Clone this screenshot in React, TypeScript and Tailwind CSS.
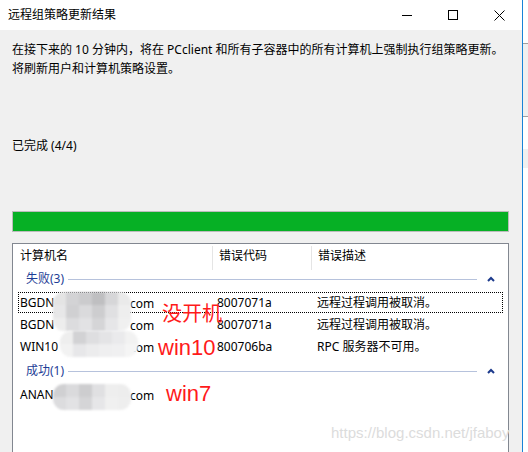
import React from "react";

const ui = "font-['Noto_Sans','Noto_Sans_CJK_SC',sans-serif]";

type Row = { name: string; code: string; desc: string; focused?: boolean };

const failed: Row[] = [
  { name: "BGDN", code: "8007071a", desc: "远程过程调用被取消。", focused: true },
  { name: "BGDN", code: "8007071a", desc: "远程过程调用被取消。" },
  { name: "WIN10", code: "800706ba", desc: "RPC 服务器不可用。" },
];

const shades = [
  "#e4e4e4", "#d3d3d5", "#cbcbcd", "#bfbfc1", "#d6d6d8", "#eaeaea",
  "#e7e7e8", "#d0d0d2", "#dadadc", "#cdcdcf", "#e0e0e2", "#eeeeee",
  "#ededed", "#dcdcde", "#e2e2e4", "#d5d5d7", "#e6e6e8", "#f0f0f0",
  "#eeeeee", "#d2d2d4", "#dedee0", "#e4e4e6", "#eaeaec", "#f2f2f2",
  "#f2f2f2", "#e7e7e9", "#ececed", "#efeff0", "#f0f0f1", "#f5f5f5",
];

function Mosaic({ rows, offset = 0 }: { rows: number; offset?: number }) {
  return (
    <div className="grid grid-cols-6 overflow-hidden rounded-[11px] blur-[0.8px]">
      {Array.from({ length: rows * 6 }).map((_, i) => (
        <div key={i} className="h-[13px] w-[13px]" style={{ background: shades[(i + offset) % shades.length] }} />
      ))}
    </div>
  );
}

function GroupHeader({ label }: { label: string }) {
  return (
    <div className="flex h-[26px] items-center pl-[13px] pr-[8px]">
      <span className="text-[12px] leading-none text-[#1e3d96]">{label}</span>
      <div className="ml-[4px] h-px flex-1 bg-[#b6c2dc]" />
      <svg width="22" height="10" viewBox="0 0 22 10" className="ml-[1px]">
        <path d="M10 7 L13 4 L16 7" fill="none" stroke="#1c3a8c" strokeWidth="2" />
      </svg>
    </div>
  );
}

function ListRow({ row }: { row: Row }) {
  return (
    <div className="flex h-[22px] items-start px-[5px]">
      <div
        className={`flex h-[21px] flex-1 items-center text-[12px] text-black ${
          row.focused ? "border border-dotted border-black" : "border border-transparent"
        }`}
      >
        <span className="w-[198px] pl-[1px]">{row.name}</span>
        <span className="w-[100px]">{row.code}</span>
        <span>{row.desc}</span>
      </div>
    </div>
  );
}

export default function App() {
  return (
    <div className={`relative flex h-[452px] w-[528px] overflow-hidden bg-white ${ui}`}>
      {/* dialog */}
      <div className="flex w-[522px] flex-col bg-[#f0f0f0]">
        {/* title bar */}
        <div className="flex h-[30px] items-center bg-white">
          <span className="pl-[8px] text-[12px] text-black">远程组策略更新结果</span>
          <div className="ml-auto flex h-full items-center">
            <div className="flex h-full w-[46px] items-center justify-center">
              <div className="h-px w-[10px] bg-black" />
            </div>
            <div className="flex h-full w-[46px] items-center justify-center">
              <div className="h-[10px] w-[10px] border border-black" />
            </div>
            <div className="flex h-full w-[46px] items-center justify-center">
              <svg width="11" height="11" viewBox="0 0 11 11">
                <path d="M0.5 0.5 L10.5 10.5 M10.5 0.5 L0.5 10.5" stroke="#000" strokeWidth="1" />
              </svg>
            </div>
          </div>
        </div>

        {/* body */}
        <div className="flex flex-1 flex-col pl-[12px]">
          <p className="mt-[10px] text-[12px] leading-[19px] text-black">
            在接下来的 10 分钟内，将在 PCclient 和所有子容器中的所有计算机上强制执行组策略更新。
            <br />
            将刷新用户和计算机策略设置。
          </p>

          <p className="mt-[58px] text-[12px] leading-[19px] text-black">已完成 (4/4)</p>

          <div className="mt-[56px] h-[21px] w-[497px] border border-[#bcbcbc] bg-[#06b025]" />

          {/* result list */}
          <div className="mt-[11px] flex-1 w-[497px] border-x border-t border-[#828790] bg-white">
            <div className="flex h-[22px] items-center pt-[2px] text-[12px] text-black">
              <div className="flex h-full w-[199px] items-center pl-[7px]">计算机名</div>
              <div className="h-[24px] w-px self-start bg-[#e5e5e5]" />
              <div className="flex h-full w-[98px] items-center pl-[6px]">错误代码</div>
              <div className="h-[24px] w-px self-start bg-[#e5e5e5]" />
              <div className="flex h-full items-center pl-[6px]">错误描述</div>
            </div>

            <GroupHeader label="失败(3)" />
            {failed.map((r, i) => (
              <ListRow key={i} row={r} />
            ))}
            <GroupHeader label="成功(1)" />
            <ListRow row={{ name: "ANAN", code: "", desc: "" }} />
          </div>
        </div>
      </div>

      {/* window edge + neighbouring window */}
      <div className="w-px bg-[#1883d7]" />
      <div className="flex flex-1 flex-col">
        <div className="h-[43px] bg-white" />
        <div className="h-px bg-[#a0a0a0]" />
        <div className="h-[72px] bg-[#f0f0f0]" />
        <div className="h-px bg-[#a0a0a0]" />
        <div className="h-[32px] bg-white" />
        <div className="h-[19px] bg-[#f0f0f0]" />
        <div className="flex-1 bg-white" />
      </div>

      {/* "com" suffixes sitting after the masked part */}
      <span className="absolute left-[130px] top-[293px] text-[12px] leading-[21px] text-black">com</span>
      <span className="absolute left-[130px] top-[315px] text-[12px] leading-[21px] text-black">com</span>
      <span className="absolute left-[130px] top-[337px] text-[12px] leading-[21px] text-black">com</span>
      <span className="absolute left-[130px] top-[385px] text-[12px] leading-[21px] text-black">com</span>

      {/* mosaic masks */}
      <div className="absolute left-[53px] top-[292px]">
        <Mosaic rows={3} />
      </div>
      <div className="absolute left-[60px] top-[331px]">
        <Mosaic rows={2} offset={18} />
      </div>
      <div className="absolute left-[53px] top-[384px]">
        <Mosaic rows={2} offset={7} />
      </div>

      {/* red annotations */}
      <span className="absolute left-[162px] top-[300px] text-[20px] leading-[26px] text-[#ff1a1a] font-['Noto_Sans_CJK_SC',sans-serif]">
        没开机
      </span>
      <span className="absolute left-[158px] top-[335px] text-[22px] leading-[26px] text-[#ff1a1a] font-['Liberation_Sans',sans-serif]">
        win10
      </span>
      <span className="absolute left-[166px] top-[381px] text-[22px] leading-[26px] text-[#ff1a1a] font-['Liberation_Sans',sans-serif]">
        win7
      </span>

      {/* watermark */}
      <span className="absolute left-[331px] top-[424px] text-[15px] leading-[18px] text-[#dcdcdc] font-['Liberation_Sans',sans-serif]">
        https://blog.csdn.net/jfaboy
      </span>
    </div>
  );
}
